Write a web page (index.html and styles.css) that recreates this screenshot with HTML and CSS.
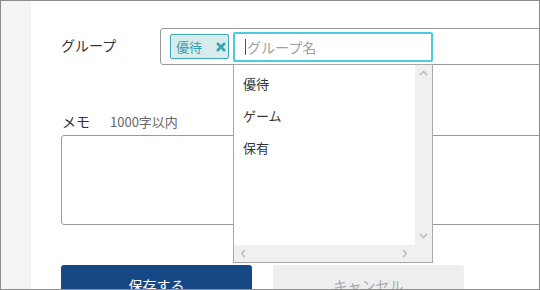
FILE: index.html
```html
<!DOCTYPE html>
<html lang="ja">
<head>
<meta charset="utf-8">
<link rel="stylesheet" href="styles.css">
</head>
<body>
<div class="frame">
  <div class="side"></div>
  <div class="main">
    <div class="group-row">
      <div class="label">グループ</div>
      <div class="group-box">
        <span class="tag">優待<svg class="tag-x" width="10" height="10" viewBox="0 0 10 10"><path d="M1 1L9 9M9 1L1 9" stroke="#3aa3b0" stroke-width="2.6" stroke-linecap="butt"/></svg></span>
        <div class="search-wrap">
          <div class="search"><span class="caret"></span><span class="ph">グループ名</span></div>
          <div class="dropdown">
            <ul class="options">
              <li>優待</li>
              <li>ゲーム</li>
              <li>保有</li>
            </ul>
            <div class="vbar">
              <svg width="9" height="6" viewBox="0 0 9 6"><path d="M1 5L4.5 1.5L8 5" fill="none" stroke="#b5b5b5" stroke-width="1.3"/></svg>
              <svg width="9" height="6" viewBox="0 0 9 6"><path d="M1 1L4.5 4.5L8 1" fill="none" stroke="#b5b5b5" stroke-width="1.3"/></svg>
            </div>
            <div class="hbar">
              <svg width="6" height="9" viewBox="0 0 6 9"><path d="M5 1L1.5 4.5L5 8" fill="none" stroke="#b5b5b5" stroke-width="1.3"/></svg>
              <svg width="6" height="9" viewBox="0 0 6 9"><path d="M1 1L4.5 4.5L1 8" fill="none" stroke="#b5b5b5" stroke-width="1.3"/></svg>
            </div>
            <div class="corner"></div>
          </div>
        </div>
      </div>
    </div>
    <div class="memo-head"><span class="memo-label">メモ</span><span class="memo-note">1000字以内</span></div>
    <div class="memo-box"></div>
    <div class="buttons">
      <button class="btn btn-save">保存する</button>
      <button class="btn btn-cancel">キャンセル</button>
    </div>
  </div>
</div>
</body>
</html>
```
FILE: styles.css
```css
* { box-sizing: border-box; }
html, body { margin: 0; padding: 0; background: #fff; }
body {
  font-family: "Noto Sans CJK JP", "Noto Sans", sans-serif;
  color: #333;
  font-size: 14px;
}
.frame {
  width: 540px;
  height: 290px;
  border: 1px solid #8c8c8c;
  display: flex;
  overflow: hidden;
  position: relative;
}
.side {
  width: 30px;
  flex: none;
  background: #f4f4f4;
}
.main {
  flex: 1;
  padding: 27px 0 0 30px;
  display: flex;
  flex-direction: column;
  min-width: 0;
}
.main > * { flex: none; }
.group-row {
  display: flex;
  align-items: center;
  margin-right: -12px;
}
.label {
  width: 99px;
  flex: none;
  font-size: 14px;
  line-height: 20px;
  color: #333;
  margin-top: -3px;
}
.group-box {
  flex: 1;
  height: 37px;
  border: 1px solid #9a9a9a;
  border-radius: 3px;
  display: flex;
  align-items: center;
  padding-left: 9px;
  gap: 4px;
}
.tag {
  display: inline-flex;
  align-items: center;
  height: 25px;
  width: 59px;
  padding-left: 5px;
  border: 1px solid #3ba8b4;
  border-radius: 2px;
  background: #d8ecee;
  color: #3a9fac;
  font-size: 13px;
  line-height: 20px;
}
.tag-x { margin-left: 14px; }
.search-wrap {
  position: relative;
  width: 200px;
  height: 30px;
}
.search {
  height: 30px;
  border: 2px solid #4ccbde;
  border-radius: 2px;
  display: flex;
  align-items: center;
  padding-left: 10px;
  color: #a0a0a0;
  font-size: 14px;
}
.caret {
  display: inline-block;
  width: 1px;
  height: 16px;
  background: #555;
  margin-right: 1px;
}
.dropdown {
  position: absolute;
  left: 0;
  top: 32px;
  width: 200px;
  height: 199px;
  background: #fff;
  border: 1px solid #a8a8a8;
  z-index: 5;
}
.options {
  list-style: none;
  margin: 0;
  padding: 3px 0 0 0;
}
.options li {
  height: 32px;
  line-height: 32px;
  padding-left: 9px;
  font-size: 13px;
  color: #333;
}
.vbar {
  position: absolute;
  right: 0;
  top: 0;
  width: 17px;
  bottom: 17px;
  background: #f0f0f0;
  display: flex;
  flex-direction: column;
  justify-content: space-between;
  align-items: center;
  padding: 5px 0 6px;
}
.hbar {
  position: absolute;
  left: 0;
  right: 17px;
  bottom: 0;
  height: 17px;
  background: #f0f0f0;
  display: flex;
  justify-content: space-between;
  align-items: center;
  padding: 0 7px 0 6px;
}
.corner {
  position: absolute;
  right: 0;
  bottom: 0;
  width: 17px;
  height: 17px;
  background: #f0f0f0;
}
.memo-head {
  margin-top: 46px;
  height: 20px;
  display: flex;
  align-items: center;
}
.memo-label {
  font-size: 14px;
  color: #333;
  margin-left: 1px;
}
.memo-note {
  font-size: 13px;
  color: #666;
  margin-left: 20px;
}
.memo-box {
  margin-top: 4px;
  height: 90px;
  border: 1px solid #9a9a9a;
  border-radius: 3px;
  margin-right: -12px;
}
.buttons {
  margin-top: 40px;
  display: flex;
  gap: 21px;
}
.btn {
  width: 191px;
  height: 38px;
  border: none;
  border-radius: 3px;
  font-family: "Noto Sans CJK JP", "Noto Sans", sans-serif;
  font-size: 14px;
  padding: 0;
  padding-top: 2px;
}
.btn-save {
  background: #174886;
  color: #fff;
}
.btn-cancel {
  background: #eeeeee;
  color: #a8a8a8;
}
```
